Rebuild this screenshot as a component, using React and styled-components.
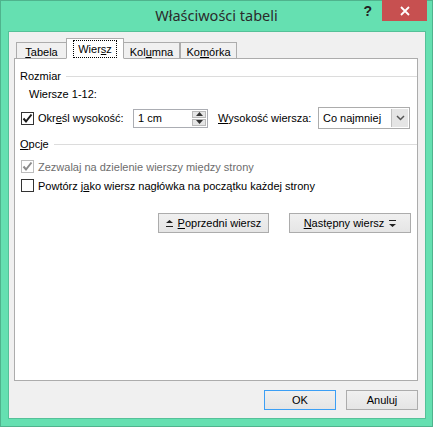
import React from 'react'
import styled, { createGlobalStyle } from 'styled-components'

const GlobalStyle = createGlobalStyle`
    html, body {
        margin: 0;
        padding: 0;
        background: #ffffff;
    }
    body {
        font-family: "Liberation Sans", Arial, sans-serif;
        font-size: 11px;
        color: #000;
    }
`

function Check({ checked, disabled }) {
    return (
        <Box disabled={disabled}>
            {checked && (
                <svg width="11" height="11" viewBox="0 0 11 11">
                    <path
                        d="M1.5 5.5 L4 8.5 L9.5 1.5"
                        fill="none"
                        stroke={disabled ? '#8c8c8c' : '#1a1a1a'}
                        strokeWidth="2"
                    />
                </svg>
            )}
        </Box>
    )
}

function App() {
    return (
        <Window>
            <GlobalStyle />
            <TitleBar>
                <Title>Właściwości tabeli</Title>
                <Help>?</Help>
                <Close>
                    <svg width="10" height="10" viewBox="0 0 10 10">
                        <path d="M1 1 L9 9 M9 1 L1 9" stroke="#fff" strokeWidth="1.8" />
                    </svg>
                </Close>
            </TitleBar>
            <Client>
                <Tabs>
                    <Tab>
                        <span>
                            <u>T</u>abela
                        </span>
                    </Tab>
                    <Tab active>
                        <Focus>
                            Wier<u>s</u>z
                        </Focus>
                    </Tab>
                    <Tab>
                        <span>
                            Kol<u>u</u>mna
                        </span>
                    </Tab>
                    <Tab>
                        <span>
                            Ko<u>m</u>órka
                        </span>
                    </Tab>
                </Tabs>
                <Panel>
                    <Group>
                        <span>Rozmiar</span>
                        <Rule />
                    </Group>
                    <Sub>Wiersze 1-12:</Sub>
                    <SizeRow>
                        <CheckLabel>
                            <Check checked />
                            <span>
                                Okr<u>e</u>śl wysokość:
                            </span>
                        </CheckLabel>
                        <Spin>
                            <SpinText>1 cm</SpinText>
                            <SpinButtons>
                                <SpinBtn>
                                    <svg width="7" height="4" viewBox="0 0 7 4">
                                        <path d="M0 4 L3.5 0 L7 4 Z" fill="#333" />
                                    </svg>
                                </SpinBtn>
                                <SpinBtn>
                                    <svg width="7" height="4" viewBox="0 0 7 4">
                                        <path d="M0 0 L3.5 4 L7 0 Z" fill="#333" />
                                    </svg>
                                </SpinBtn>
                            </SpinButtons>
                        </Spin>
                        <FieldLabel>
                            <u>W</u>ysokość wiersza:
                        </FieldLabel>
                        <Select>
                            <SelectText>Co najmniej</SelectText>
                            <Drop>
                                <svg width="9" height="6" viewBox="0 0 9 6">
                                    <path d="M1 1 L4.5 4.5 L8 1" fill="none" stroke="#555" strokeWidth="1.5" />
                                </svg>
                            </Drop>
                        </Select>
                    </SizeRow>
                    <Group top>
                        <span>
                            <u>O</u>pcje
                        </span>
                        <Rule />
                    </Group>
                    <CheckLabel disabled line>
                        <Check checked disabled />
                        <span>Zezwalaj na dzielenie wierszy między strony</span>
                    </CheckLabel>
                    <CheckLabel line>
                        <Check />
                        <span>
                            Powtórz j<u>a</u>ko wiersz nagłówka na początku każdej strony
                        </span>
                    </CheckLabel>
                    <NavRow>
                        <NavButton width={111}>
                            <Arrow>
                                <svg width="7" height="7" viewBox="0 0 7 7">
                                    <path d="M0 3 L3.5 0 L7 3 Z M0 6 H7 V7 H0 Z" fill="#222" />
                                </svg>
                            </Arrow>
                            <span>
                                <u>P</u>oprzedni wiersz
                            </span>
                        </NavButton>
                        <NavButton width={122}>
                            <span>
                                <u>N</u>astępny wiersz
                            </span>
                            <Arrow>
                                <svg width="7" height="7" viewBox="0 0 7 7">
                                    <path d="M0 0 H7 V1 H0 Z M0 4 L3.5 7 L7 4 Z" fill="#222" />
                                </svg>
                            </Arrow>
                        </NavButton>
                    </NavRow>
                </Panel>
                <Footer>
                    <DlgButton primary>OK</DlgButton>
                    <DlgButton>Anuluj</DlgButton>
                </Footer>
            </Client>
        </Window>
    )
}

const Window = styled.div`
    width: 433px;
    height: 427px;
    box-sizing: border-box;
    background: #65e0b1;
    border: 1px solid #4fb38d;
    display: flex;
    flex-direction: column;
`

const TitleBar = styled.div`
    height: 30px;
    position: relative;
    display: flex;
    align-items: center;
    justify-content: center;
`

const Title = styled.div`
    font-family: "Noto Sans", sans-serif;
    font-size: 14.5px;
    color: #2b2b2b;
    margin-top: -2px;
`

const Help = styled.div`
    position: absolute;
    right: 60px;
    top: 2px;
    font-family: "Liberation Sans", sans-serif;
    font-weight: bold;
    font-size: 14px;
    color: #222;
`

const Close = styled.div`
    position: absolute;
    right: 5px;
    top: -1px;
    width: 45px;
    height: 21px;
    background: #c75050;
    display: flex;
    align-items: center;
    justify-content: center;
`

const Client = styled.div`
    flex: 1;
    margin: 0 6px 7px 7px;
    background: #f0f0f0;
    border: 1px solid #55c198;
    padding: 6px 7px 0 5px;
    display: flex;
    flex-direction: column;
    font-size: 11px;
`

const Tabs = styled.div`
    display: flex;
    align-items: flex-end;
    padding-left: 2px;
    height: 21px;
    position: relative;
    z-index: 1;
    margin-bottom: -1px;
`

const Tab = styled.div`
    box-sizing: border-box;
    height: ${(p) => (p.active ? '21px' : '17px')};
    width: ${(p) => (p.active ? '58px' : '57px')};
    margin: ${(p) => (p.active ? '0 -1px 0 -1px' : '0')};
    display: flex;
    align-items: center;
    justify-content: center;
    background: ${(p) => (p.active ? '#ffffff' : '#f0f0f0')};
    border: 1px solid #acacac;
    border-bottom: ${(p) => (p.active ? '1px solid #ffffff' : '1px solid #acacac')};
    position: relative;
    z-index: ${(p) => (p.active ? 2 : 1)};
    padding-top: ${(p) => (p.active ? '0' : '2px')};
    &:first-child {
        width: 51px;
    }
`

const Focus = styled.span`
    outline: 1px dotted #000;
    padding: 0 4px;
    line-height: 16px;
`

const Panel = styled.div`
    height: 323px;
    box-sizing: border-box;
    background: #ffffff;
    border: 1px solid #acacac;
    padding: 9px 0 0 5px;
    display: flex;
    flex-direction: column;
`

const Group = styled.div`
    display: flex;
    align-items: center;
    gap: 5px;
    height: 16px;
    margin-top: ${(p) => (p.top ? '7px' : '0')};
    margin-bottom: ${(p) => (p.top ? '5px' : '2px')};
`

const Rule = styled.div`
    flex: 1;
    height: 1px;
    background: #dcdcdc;
`

const Sub = styled.div`
    padding-left: 9px;
    height: 16px;
    line-height: 16px;
    margin-bottom: 5px;
`

const SizeRow = styled.div`
    display: flex;
    align-items: center;
    height: 22px;
`

const CheckLabel = styled.label`
    display: flex;
    align-items: center;
    gap: 4px;
    color: ${(p) => (p.disabled ? '#6d6d6d' : '#000')};
    width: ${(p) => (p.line ? 'auto' : '112px')};
    height: ${(p) => (p.line ? '19px' : 'auto')};
    margin-left: 1px;
    white-space: nowrap;
`

const Box = styled.span`
    width: 13px;
    height: 13px;
    box-sizing: border-box;
    border: 1px solid ${(p) => (p.disabled ? '#bcbcbc' : '#333')};
    background: #fff;
    display: inline-flex;
    align-items: center;
    justify-content: center;
    flex-shrink: 0;
`

const Spin = styled.div`
    width: 75px;
    height: 19px;
    box-sizing: border-box;
    border: 1px solid #abadb3;
    display: flex;
    background: #fff;
`

const SpinText = styled.div`
    flex: 1;
    padding-left: 4px;
    line-height: 17px;
`

const SpinButtons = styled.div`
    width: 14px;
    display: flex;
    flex-direction: column;
    padding: 1px;
    gap: 1px;
`

const SpinBtn = styled.div`
    flex: 1;
    background: #e5e5e5;
    border: 1px solid #b9b9b9;
    display: flex;
    align-items: center;
    justify-content: center;
`

const FieldLabel = styled.div`
    margin-left: 10px;
    width: 100px;
    white-space: nowrap;
`

const Select = styled.div`
    width: 92px;
    height: 22px;
    box-sizing: border-box;
    border: 1px solid #acacac;
    background: #fff;
    display: flex;
    align-items: center;
`

const SelectText = styled.div`
    flex: 1;
    padding-left: 4px;
`

const Drop = styled.div`
    width: 16px;
    height: 18px;
    margin-right: 1px;
    background: #e5e5e5;
    border-left: 1px solid #c0c0c0;
    display: flex;
    align-items: center;
    justify-content: center;
`

const NavRow = styled.div`
    display: flex;
    justify-content: flex-end;
    gap: 20px;
    padding-right: 6px;
    margin-top: 18px;
`

const NavButton = styled.button`
    width: ${(p) => p.width}px;
    height: 20px;
    box-sizing: border-box;
    border: 1px solid #acacac;
    background: linear-gradient(#f0f0f0, #e5e5e5);
    font: inherit;
    color: #000;
    display: flex;
    align-items: center;
    justify-content: center;
    gap: 5px;
    padding: 0;
    white-space: nowrap;
`

const Arrow = styled.span`
    display: inline-flex;
    align-items: center;
`

const Footer = styled.div`
    display: flex;
    justify-content: flex-end;
    gap: 10px;
    margin-top: 9px;
`

const DlgButton = styled.button`
    width: 72px;
    height: 20px;
    box-sizing: border-box;
    border: 1px solid ${(p) => (p.primary ? '#3c9ff5' : '#acacac')};
    background: linear-gradient(#f0f0f0, #e5e5e5);
    font: inherit;
    color: #000;
    padding: 0;
`

export default App
